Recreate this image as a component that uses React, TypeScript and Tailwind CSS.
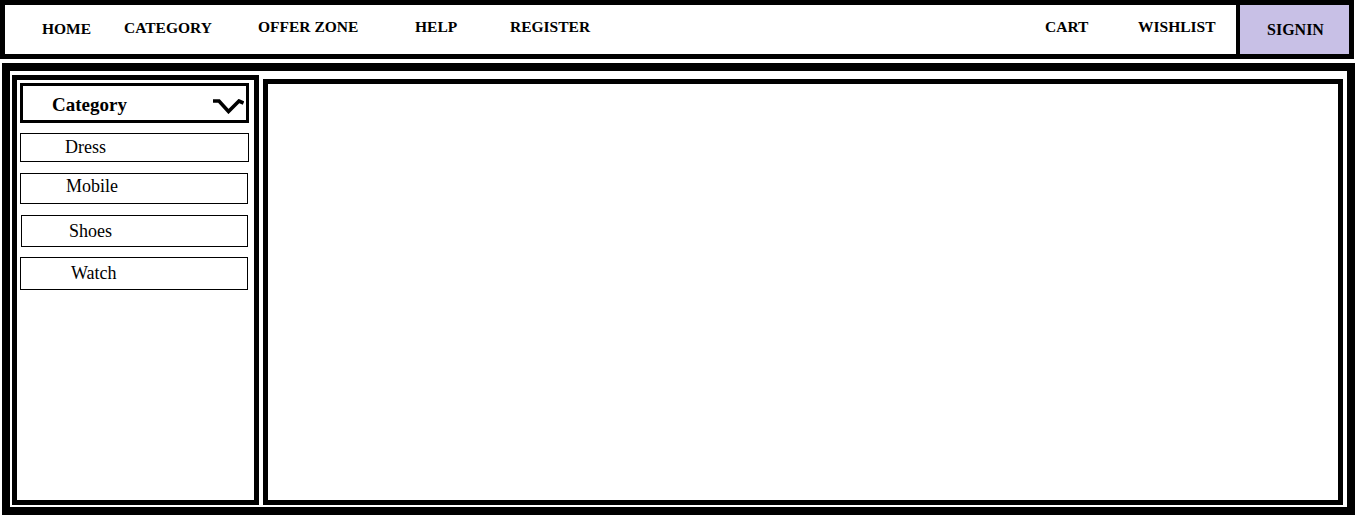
import React from "react";

const leftLinks = [
  { label: "HOME", className: "w-[82px] pt-[15px]" },
  { label: "CATEGORY", className: "w-[134px] pt-[14px]" },
  { label: "OFFER ZONE", className: "w-[157px] pt-[13px]" },
  { label: "HELP", className: "w-[95px] pt-[13px]" },
  { label: "REGISTER", className: "w-[100px] pt-[13px]" },
];

const categories = [
  { label: "Dress", className: "mt-[10px] w-[229px] h-[29px] pl-[44px] pt-[3px]" },
  { label: "Mobile", className: "mt-[11px] w-[228px] h-[31px] pl-[45px] pt-[2px]" },
  { label: "Shoes", className: "mt-[11px] ml-[1px] w-[227px] h-[32px] pl-[47px] pt-[5px]" },
  { label: "Watch", className: "mt-[10px] w-[228px] h-[33px] pl-[50px] pt-[5px]" },
];

function Navbar() {
  return (
    <nav className="flex w-[1354px] h-[59px] border-[5px] border-black bg-white text-[15.5px] leading-[17px] font-bold">
      <div className="flex pl-[37px]">
        {leftLinks.map((link) => (
          <a key={link.label} href="#" className={link.className}>
            {link.label}
          </a>
        ))}
      </div>
      <div className="flex-1" />
      <a href="#" className="w-[93px] pt-[13px]">
        CART
      </a>
      <a href="#" className="w-[98px] pt-[13px]">
        WISHLIST
      </a>
      <a
        href="#"
        className="block w-[113px] h-full border-l-4 border-black bg-[#c8c0e6] pl-[27px] pt-[16px] text-[16px] leading-[17px]"
      >
        SIGNIN
      </a>
    </nav>
  );
}

function Chevron() {
  return (
    <svg width="31" height="15" viewBox="0 0 31 15" className="mr-[2px] mt-[13px]">
      <path
        d="M0 2 H6 L15.5 12.5 L26 2 L30.5 4"
        fill="none"
        stroke="black"
        strokeWidth="3.6"
        strokeLinejoin="miter"
      />
    </svg>
  );
}

function Sidebar() {
  return (
    <aside className="w-[247px] h-[430px] shrink-0 border-[5px] border-black bg-white pl-[3px] pt-[3px]">
      <div className="flex justify-between w-[229px] h-[40px] border-[3px] border-black">
        <span className="pl-[29px] pt-[8px] text-[19px] leading-[22px] font-bold">
          Category
        </span>
        <Chevron />
      </div>
      <ul className="text-[18px] leading-[21px]">
        {categories.map((cat) => (
          <li key={cat.label} className={"border border-black " + cat.className}>
            {cat.label}
          </li>
        ))}
      </ul>
    </aside>
  );
}

export default function App() {
  return (
    <div className="w-[1356px] h-[518px] bg-white text-black font-['Liberation_Serif','Times_New_Roman',serif]">
      <Navbar />
      <main className="flex gap-1 mt-1 ml-0.5 w-[1353px] border-8 border-black pl-0.5 pr-1 pt-1 pb-0.5">
        <Sidebar />
        <section className="flex-1 h-[426px] mt-1 border-[5px] border-black bg-white" />
      </main>
    </div>
  );
}
